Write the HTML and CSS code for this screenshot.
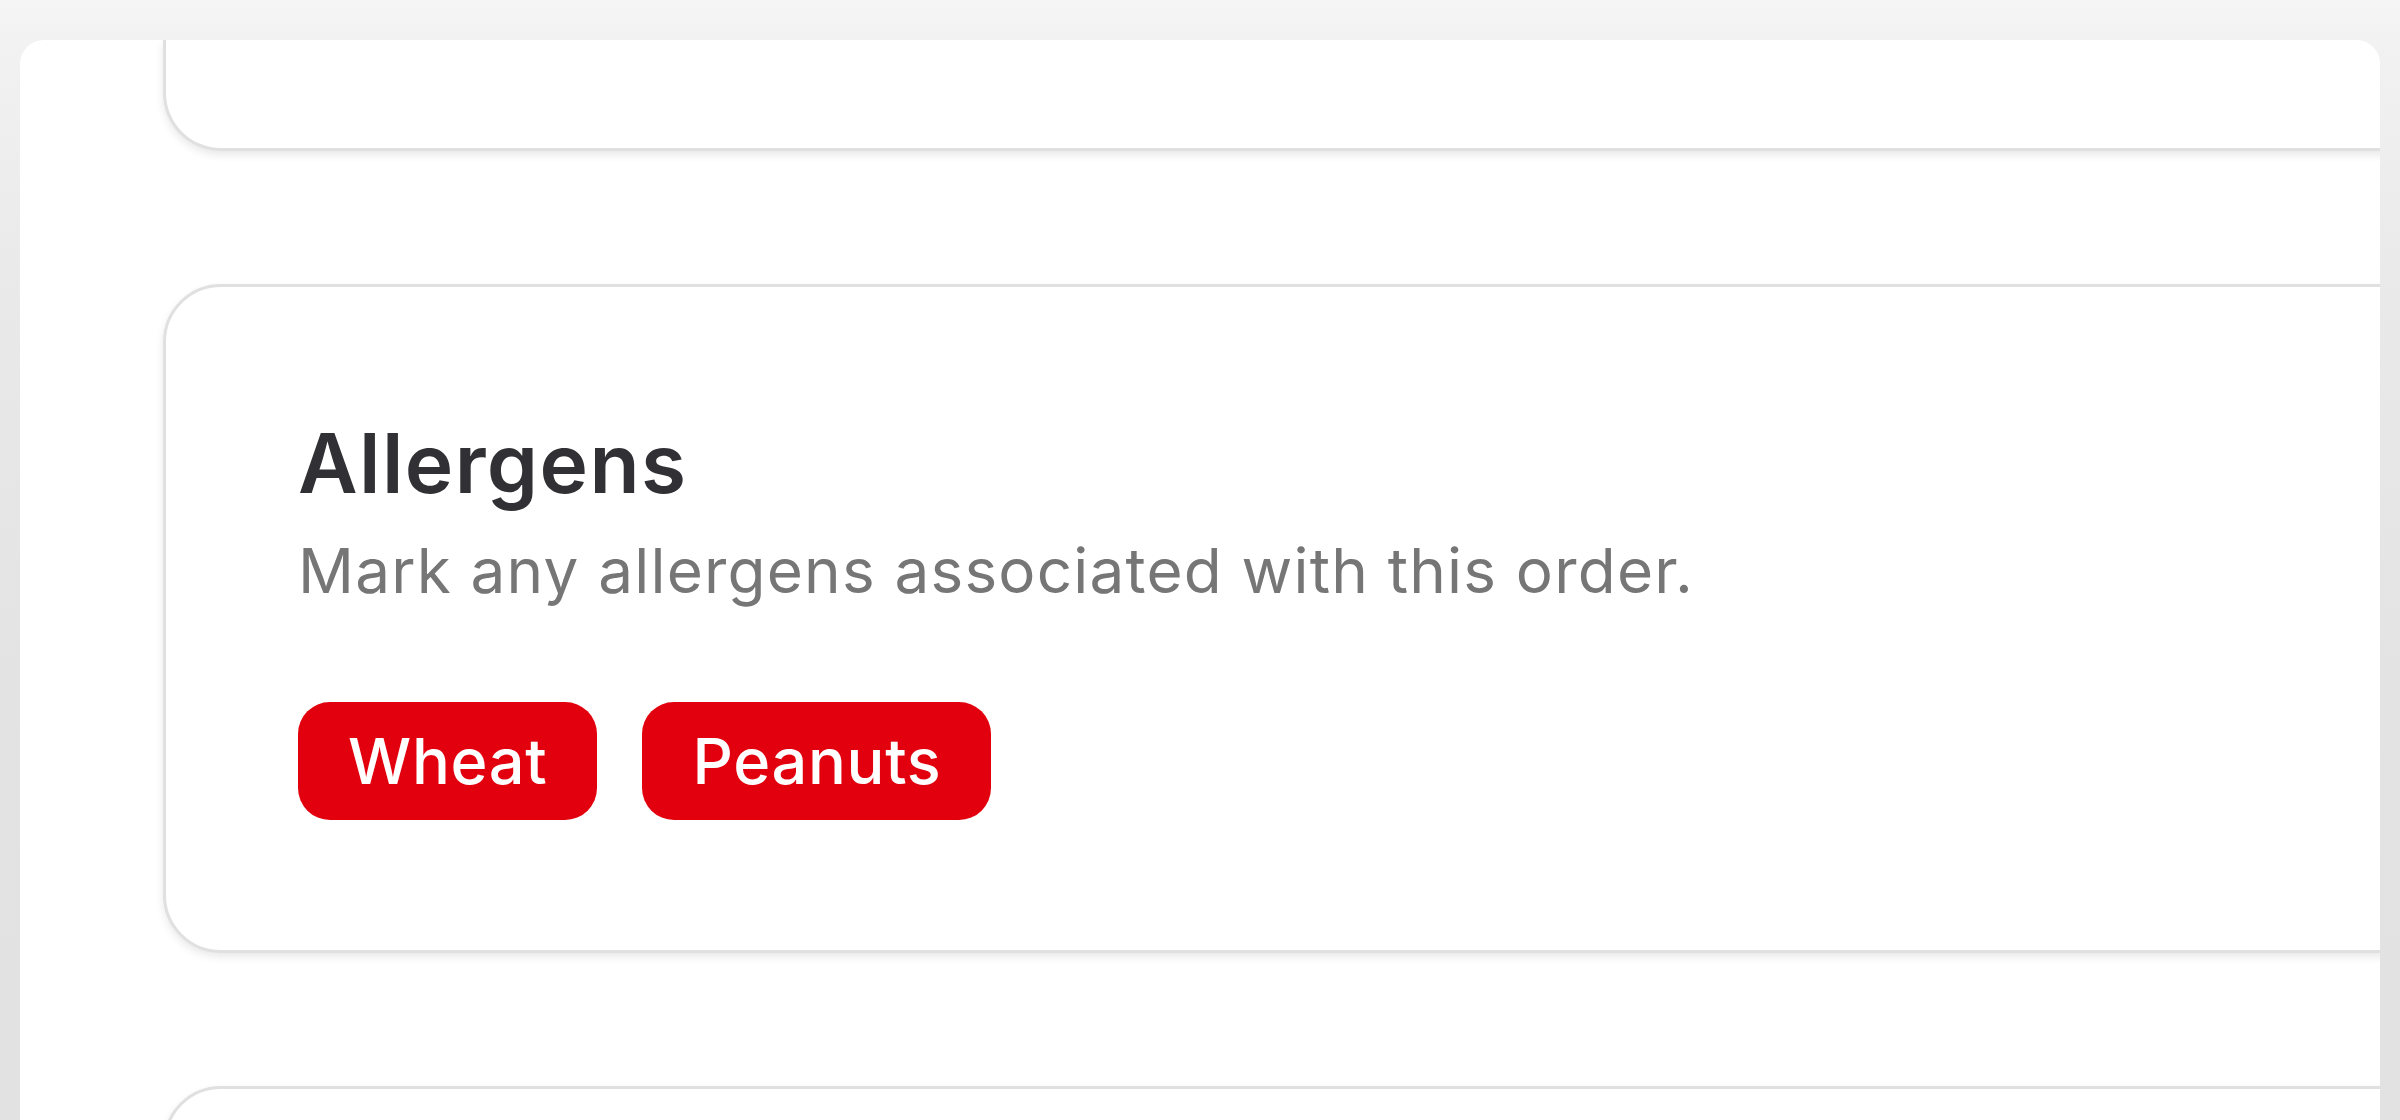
FILE: index.html
```html
<!DOCTYPE html>
<html lang="en">
<head>
<meta charset="utf-8">
<title>Allergens</title>
<link rel="stylesheet" href="styles.css">
</head>
<body>
  <div class="panel">
    <div class="list">
      <section class="card card-cut"></section>
      <section class="card">
        <h2 class="card-title">Allergens</h2>
        <p class="card-sub">Mark any allergens associated with this order.</p>
        <div class="chips">
          <span class="chip">Wheat</span>
          <span class="chip">Peanuts</span>
        </div>
      </section>
      <section class="card card-next"></section>
    </div>
  </div>
</body>
</html>
```

FILE: styles.css
```css
html, body {
  margin: 0;
  padding: 0;
}

body {
  width: 2400px;
  height: 1120px;
  overflow: hidden;
  box-sizing: border-box;
  padding: 40px 20px 0 20px;
  background: linear-gradient(to bottom, #f5f5f5 0px, #f1f1f1 60px, #e9e9e9 300px, #e3e3e3 700px, #e2e2e2 100%);
  font-family: Inter, "Noto Sans", "Liberation Sans", sans-serif;
  display: flex;
}

.panel {
  flex: 1;
  height: 1080px;
  background: #ffffff;
  border-radius: 24px 24px 0 0;
  overflow: hidden;
  padding-left: 143px;
}

.list {
  display: flex;
  flex-direction: column;
  gap: 133px;
  margin-right: -120px;
}

.card {
  background: #ffffff;
  border: 3px solid #e0e0e0;
  border-radius: 58px;
  box-shadow: 0 4px 8px rgba(0, 0, 0, 0.09);
  padding: 128px 132px 130px 132px;
  display: flex;
  flex-direction: column;
}

.card-cut {
  height: 111px;
  box-sizing: border-box;
  padding: 0;
  border-top: none;
  border-radius: 0 0 58px 58px;
}

.card-next {
  height: 300px;
  flex: none;
}

.card-title {
  margin: 0;
  font-size: 82px;
  line-height: 1.2;
  font-weight: 600;
  color: #313135;
  letter-spacing: 1.4px;
}

.card-sub {
  margin: 21px 0 0 0;
  font-size: 62px;
  line-height: 1.2;
  font-weight: 400;
  color: #767676;
  letter-spacing: 1.2px;
}

.chips {
  display: flex;
  gap: 45px;
  margin-top: 93px;
}

.chip {
  height: 118px;
  box-sizing: border-box;
  padding: 0 50px;
  display: inline-flex;
  align-items: center;
  background: #e3000e;
  color: #ffffff;
  border-radius: 32px;
  font-size: 63px;
  font-weight: 500;
  letter-spacing: 0.7px;
}
```
